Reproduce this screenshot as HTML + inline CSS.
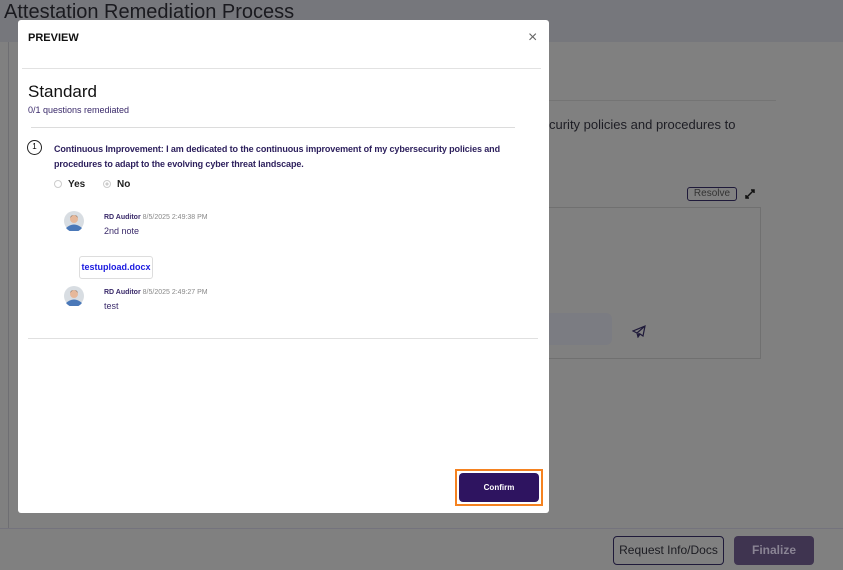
<!DOCTYPE html>
<html style="background:#808080"><head><meta charset="utf-8"><style>
*{margin:0;padding:0;box-sizing:border-box}
html,body{width:843px;height:570px;overflow:hidden;background:#808080}
body{font-family:"Liberation Sans",sans-serif;position:relative}
.a{position:absolute}
</style></head><body>
<div class="a" style="left:0;top:0;width:843px;height:570px;background:#808080"></div>
<div class="a" style="left:0;top:0;width:843px;height:42px;background:#76777c"></div>
<div class="a" style="left:4px;top:1px;font-size:20px;color:#1a1a1f;white-space:nowrap">Attestation Remediation Process</div>
<div class="a" style="left:8px;top:42px;width:1px;height:487px;background:#6e6e72"></div>
<div class="a" style="left:0;top:528px;width:843px;height:1px;background:#74737d"></div>
<div class="a" style="left:549px;top:100px;width:227px;height:1px;background:#747474"></div>
<div class="a" style="left:549px;top:117px;font-size:13px;color:#1d1d24;white-space:nowrap">curity policies and procedures to</div>
<div class="a" style="left:687px;top:187px;width:50px;height:14px;border:1px solid #1f1a3a;border-radius:3px;font-size:10px;color:#333;text-align:center;line-height:12px">Resolve</div>
<svg class="a" style="left:745px;top:189px" width="10" height="10" viewBox="0 0 10 10"><path d="M1 9L9 1M6 1h3v3M1 6v3h3" fill="none" stroke="#111" stroke-width="1.5"/></svg>
<div class="a" style="left:549px;top:207px;width:212px;height:152px;border:1px solid #707070;border-left:none"></div>
<div class="a" style="left:549px;top:313px;width:63px;height:32px;background:#7b7c82;border-radius:0 6px 6px 0"></div>
<svg class="a" style="left:632px;top:325px" width="14" height="13" viewBox="0 0 14 13"><path d="M13 1L1 6l4 2 1 4 2-3 3 2zM5 8l8-7M6 12l1-4" fill="none" stroke="#1f1a3a" stroke-width="1.2"/></svg>
<div class="a" style="left:613px;top:536px;width:111px;height:29px;border:1px solid #1f1a3a;border-radius:4px;font-size:12px;color:#1c1c22;text-align:center;line-height:27px">Request Info/Docs</div>
<div class="a" style="left:734px;top:536px;width:80px;height:29px;background:#3f3450;border-radius:4px;font-size:12px;font-weight:bold;color:#8a8494;text-align:center;line-height:29px">Finalize</div>

<div class="a" style="left:18px;top:20px;width:531px;height:493px;background:#fff;border-radius:3px">
 <div class="a" style="left:10px;top:12px;font-size:11px;font-weight:bold;color:#111">PREVIEW</div>
 <div class="a" style="left:510px;top:9px;font-size:16px;color:#666">×</div>
 <div class="a" style="left:4px;top:48px;width:519px;height:1px;background:#e2e2e2"></div>
 <div class="a" style="left:10px;top:62px;font-size:17px;color:#111">Standard</div>
 <div class="a" style="left:10px;top:85px;font-size:9px;color:#3a2a6a">0/1 questions remediated</div>
 <div class="a" style="left:13px;top:107px;width:484px;height:1px;background:#dcdcdc"></div>
 <div class="a" style="left:9px;top:120px;width:15px;height:15px;border:1.3px solid #222;border-radius:50%;font-size:8px;text-align:center;line-height:12px">1</div>
 <div class="a" style="left:36px;top:122px;font-size:9px;font-weight:bold;line-height:15px;color:#2c1f5c;width:450px;letter-spacing:-0.1px">Continuous Improvement: I am dedicated to the continuous improvement of my cybersecurity policies and procedures to adapt to the evolving cyber threat landscape.</div>
 <div class="a" style="left:36px;top:160px;width:8px;height:8px;border:1px solid #ccc;border-radius:50%"></div>
 <div class="a" style="left:50px;top:159px;font-size:10px;font-weight:bold;color:#222">Yes</div>
 <div class="a" style="left:85px;top:160px;width:8px;height:8px;border:1px solid #ccc;border-radius:50%;background:radial-gradient(#ccc 35%,#fff 40%)"></div>
 <div class="a" style="left:99px;top:159px;font-size:10px;font-weight:bold;color:#222">No</div>

 <svg class="a" style="left:46px;top:191px" width="20" height="20" viewBox="0 0 20 20"><circle cx="10" cy="10" r="10" fill="#d8dde2"/><path d="M2 17q8-7 16 0a10 10 0 0 1-16 0z" fill="#4a78b8"/><circle cx="10" cy="8" r="4" fill="#e6b89a"/><path d="M6 7q4-6 8 0q-1-3-4-3q-3 0-4 3z" fill="#333"/></svg>
 <div class="a" style="left:86px;top:194px;font-size:7px;white-space:nowrap"><b style="color:#3a2a6a">RD Auditor</b> <span style="color:#888">8/5/2025 2:49:38 PM</span></div>
 <div class="a" style="left:86px;top:206px;font-size:9px;color:#3a2a6a">2nd note</div>
 <div class="a" style="left:61px;top:236px;width:74px;height:23px;border:1px solid #ddd;border-radius:3px;font-size:9px;font-weight:bold;color:#1a1ae0;text-align:center;line-height:21px">testupload.docx</div>
 <svg class="a" style="left:46px;top:266px" width="20" height="20" viewBox="0 0 20 20"><circle cx="10" cy="10" r="10" fill="#d8dde2"/><path d="M2 17q8-7 16 0a10 10 0 0 1-16 0z" fill="#4a78b8"/><circle cx="10" cy="8" r="4" fill="#e6b89a"/><path d="M6 7q4-6 8 0q-1-3-4-3q-3 0-4 3z" fill="#333"/></svg>
 <div class="a" style="left:86px;top:269px;font-size:7px;white-space:nowrap"><b style="color:#3a2a6a">RD Auditor</b> <span style="color:#888">8/5/2025 2:49:27 PM</span></div>
 <div class="a" style="left:86px;top:281px;font-size:9px;color:#3a2a6a">test</div>
 <div class="a" style="left:10px;top:318px;width:510px;height:1px;background:#e0e0e0"></div>

 <div class="a" style="left:437px;top:449px;width:88px;height:37px;border:2px solid #f58220"></div>
 <div class="a" style="left:441px;top:453px;width:80px;height:29px;background:#2e1460;border-radius:4px;font-size:8px;font-weight:bold;color:#fff;text-align:center;line-height:29px">Confirm</div>
</div>
</body></html>
